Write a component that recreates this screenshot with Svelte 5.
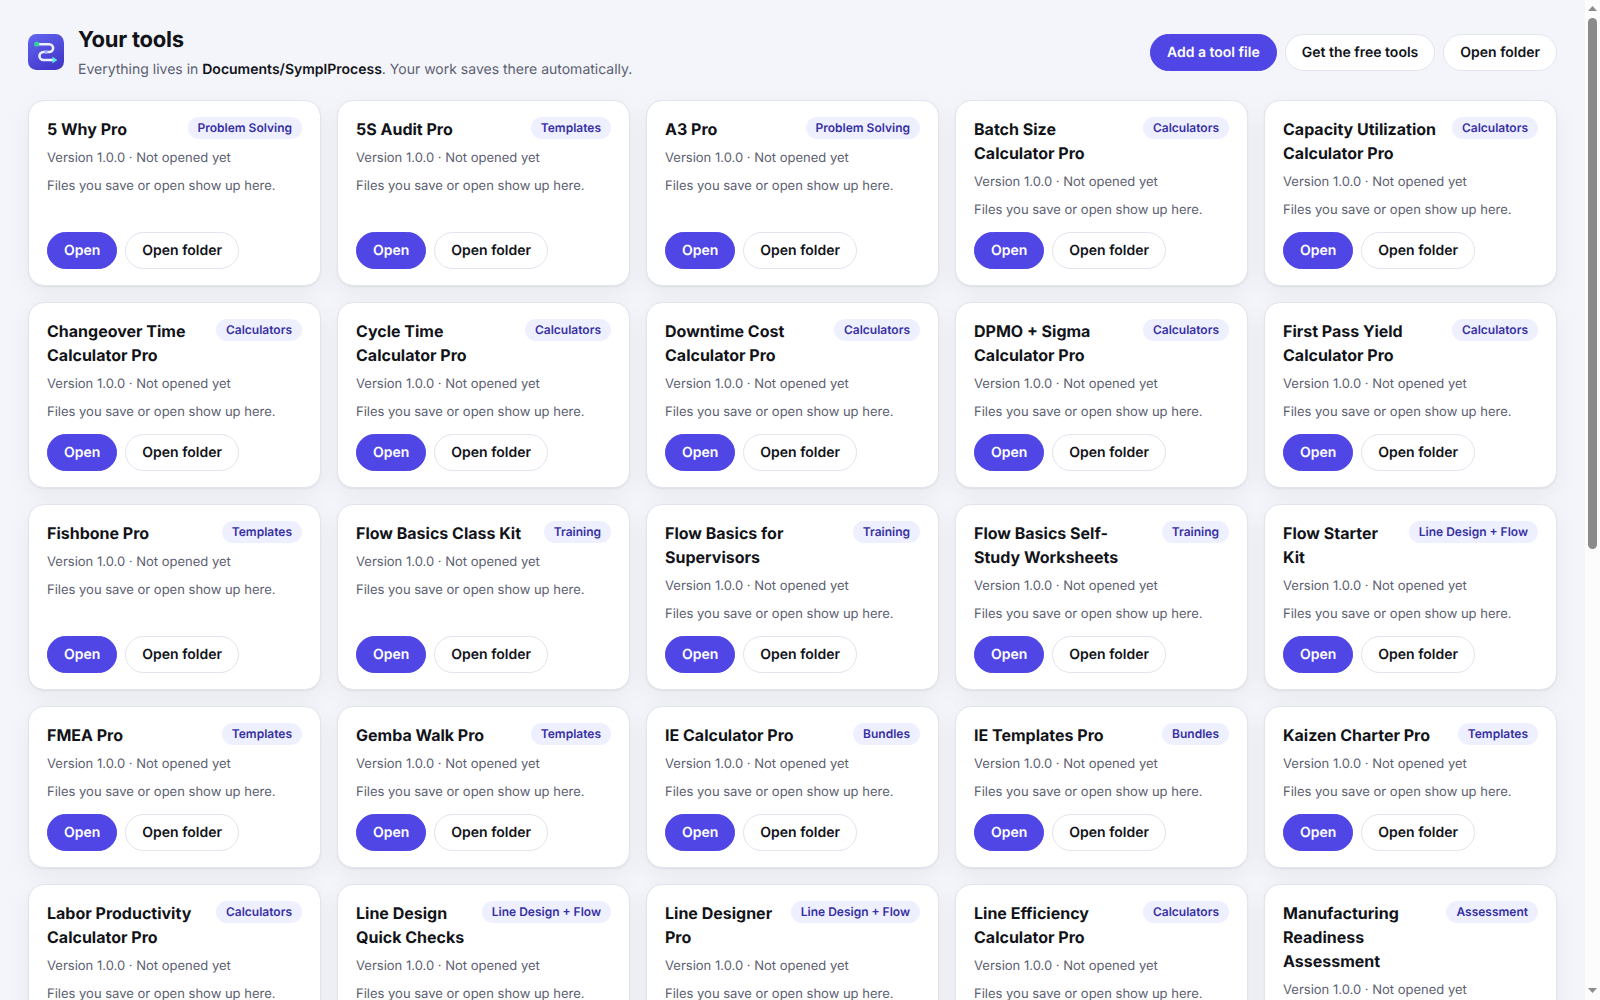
<script lang="ts">
  type Tool = { name: string; category: string };

  const libraryPath = 'Documents/SymplProcess';

  const tools: Tool[] = [
    { name: '5 Why Pro', category: 'Problem Solving' },
    { name: '5S Audit Pro', category: 'Templates' },
    { name: 'A3 Pro', category: 'Problem Solving' },
    { name: 'Batch Size Calculator Pro', category: 'Calculators' },
    { name: 'Capacity Utilization Calculator Pro', category: 'Calculators' },
    { name: 'Changeover Time Calculator Pro', category: 'Calculators' },
    { name: 'Cycle Time Calculator Pro', category: 'Calculators' },
    { name: 'Downtime Cost Calculator Pro', category: 'Calculators' },
    { name: 'DPMO + Sigma Calculator Pro', category: 'Calculators' },
    { name: 'First Pass Yield Calculator Pro', category: 'Calculators' },
    { name: 'Fishbone Pro', category: 'Templates' },
    { name: 'Flow Basics Class Kit', category: 'Training' },
    { name: 'Flow Basics for Supervisors', category: 'Training' },
    { name: 'Flow Basics Self-Study Worksheets', category: 'Training' },
    { name: 'Flow Starter Kit', category: 'Line Design + Flow' },
    { name: 'FMEA Pro', category: 'Templates' },
    { name: 'Gemba Walk Pro', category: 'Templates' },
    { name: 'IE Calculator Pro', category: 'Bundles' },
    { name: 'IE Templates Pro', category: 'Bundles' },
    { name: 'Kaizen Charter Pro', category: 'Templates' },
    { name: 'Labor Productivity Calculator Pro', category: 'Calculators' },
    { name: 'Line Design Quick Checks', category: 'Line Design + Flow' },
    { name: 'Line Designer Pro', category: 'Line Design + Flow' },
    { name: 'Line Efficiency Calculator Pro', category: 'Calculators' },
    { name: 'Manufacturing Readiness Assessment', category: 'Assessment' },
  ];
</script>

<div class="window">
  <main class="page">
    <header class="header">
      <svg class="logo" viewBox="0 0 36 36" aria-hidden="true">
        <defs>
          <linearGradient id="logo-bg" x1="0" y1="0" x2="0.6" y2="1">
            <stop offset="0" stop-color="#6366f1" />
            <stop offset="1" stop-color="#4338ca" />
          </linearGradient>
        </defs>
        <rect width="36" height="36" rx="8.5" fill="url(#logo-bg)" />
        <path
          d="M9 10.2H21.2A3.9 3.9 0 0 1 21.2 18H15.5A4 4 0 0 0 15.5 26H26"
          fill="none"
          stroke="#eef0ff"
          stroke-width="2.6"
          stroke-linecap="round"
        />
        <rect x="6.2" y="7.8" width="5" height="4.8" rx="1.6" fill="#34d399" />
        <circle cx="18" cy="18" r="1.7" fill="#a5b4fc" />
        <path d="M24.4 22.8L29.4 26L24.4 29.2Z" fill="#5eead4" />
      </svg>
      <div class="heading">
        <h1>Your tools</h1>
        <p>Everything lives in <strong>{libraryPath}</strong>. Your work saves there automatically.</p>
      </div>
      <div class="header-actions">
        <button class="btn primary">Add a tool file</button>
        <button class="btn">Get the free tools</button>
        <button class="btn">Open folder</button>
      </div>
    </header>

    <section class="grid">
      {#each tools as tool (tool.name)}
        <article class="card">
          <div class="card-top">
            <h2>{tool.name}</h2>
            <span class="badge">{tool.category}</span>
          </div>
          <p class="meta">Version 1.0.0 · Not opened yet</p>
          <p class="meta">Files you save or open show up here.</p>
          <div class="card-actions">
            <button class="btn primary">Open</button>
            <button class="btn">Open folder</button>
          </div>
        </article>
      {/each}
    </section>
  </main>

  <div class="scrollbar" aria-hidden="true">
    <svg viewBox="0 0 9 5"><path d="M4.5 0L9 5H0Z" /></svg>
    <div class="track"><div class="thumb"></div></div>
    <svg viewBox="0 0 9 5"><path d="M0 0H9L4.5 5Z" /></svg>
  </div>
</div>

<style>
  :global(body) {
    background: #f4f5fb;
  }

  .window {
    display: flex;
    height: 100vh;
    overflow: hidden;
    background: #f4f5fb;
    color: #111318;
    font-family: Inter, 'Liberation Sans', sans-serif;
    font-size: 14px;
    line-height: 1.5;
    text-rendering: geometricPrecision;
  }

  .page {
    flex: 1;
    min-width: 0;
    padding: 24px 28px;
    box-sizing: border-box;
    overflow: hidden;
  }

  .header {
    display: flex;
    align-items: center;
    gap: 14px;
    margin-bottom: 20px;
  }

  .logo {
    width: 36px;
    height: 36px;
    flex: none;
  }

  .heading {
    flex: 1;
  }

  h1,
  h2,
  p {
    margin: 0;
  }

  h1 {
    font-size: 22px;
    font-weight: 700;
    letter-spacing: -0.01em;
  }

  .heading p {
    margin-top: 2px;
    color: #5b6070;
  }

  strong {
    color: #111318;
    font-weight: 600;
  }

  .header-actions,
  .card-actions {
    display: flex;
    gap: 8px;
  }

  .btn {
    padding: 7px 16px;
    border: 1px solid #e2e4ee;
    border-radius: 999px;
    background: #fff;
    color: #111318;
    font: inherit;
    font-weight: 600;
    text-rendering: inherit;
    white-space: nowrap;
  }

  .btn.primary {
    border-color: #4f46e5;
    background: #4f46e5;
    color: #fff;
  }

  .grid {
    display: grid;
    grid-template-columns: repeat(5, minmax(0, 1fr));
    gap: 16px;
  }

  .card {
    display: flex;
    flex-direction: column;
    gap: 8px;
    padding: 16px 18px;
    border: 1px solid #e2e4ee;
    border-radius: 16px;
    background: #fff;
    box-shadow:
      0 1px 2px rgba(17, 19, 24, 0.06),
      0 8px 24px rgba(17, 19, 24, 0.05);
  }

  .card-top {
    display: flex;
    align-items: flex-start;
    justify-content: space-between;
    gap: 10px;
  }

  h2 {
    font-size: 16px;
    font-weight: 700;
  }

  .badge {
    flex: none;
    padding: 2px 10px;
    border-radius: 999px;
    background: #eef0ff;
    color: #3730a3;
    font-size: 12px;
    font-weight: 600;
    white-space: nowrap;
  }

  .meta {
    color: #5b6070;
    font-size: 13px;
  }

  .card-actions {
    margin-top: auto;
    padding-top: 4px;
  }

  .scrollbar {
    display: flex;
    flex: none;
    flex-direction: column;
    align-items: center;
    width: 15px;
    padding: 6px 0 7px;
    box-sizing: border-box;
    background: #fcfcfc;
  }

  .scrollbar svg {
    width: 9px;
    height: 5px;
    fill: #8b8b8b;
  }

  .track {
    flex: 1;
    padding-top: 7px;
  }

  .thumb {
    width: 9px;
    height: 531px;
    border-radius: 5px;
    background: #8b8b8b;
  }
</style>
